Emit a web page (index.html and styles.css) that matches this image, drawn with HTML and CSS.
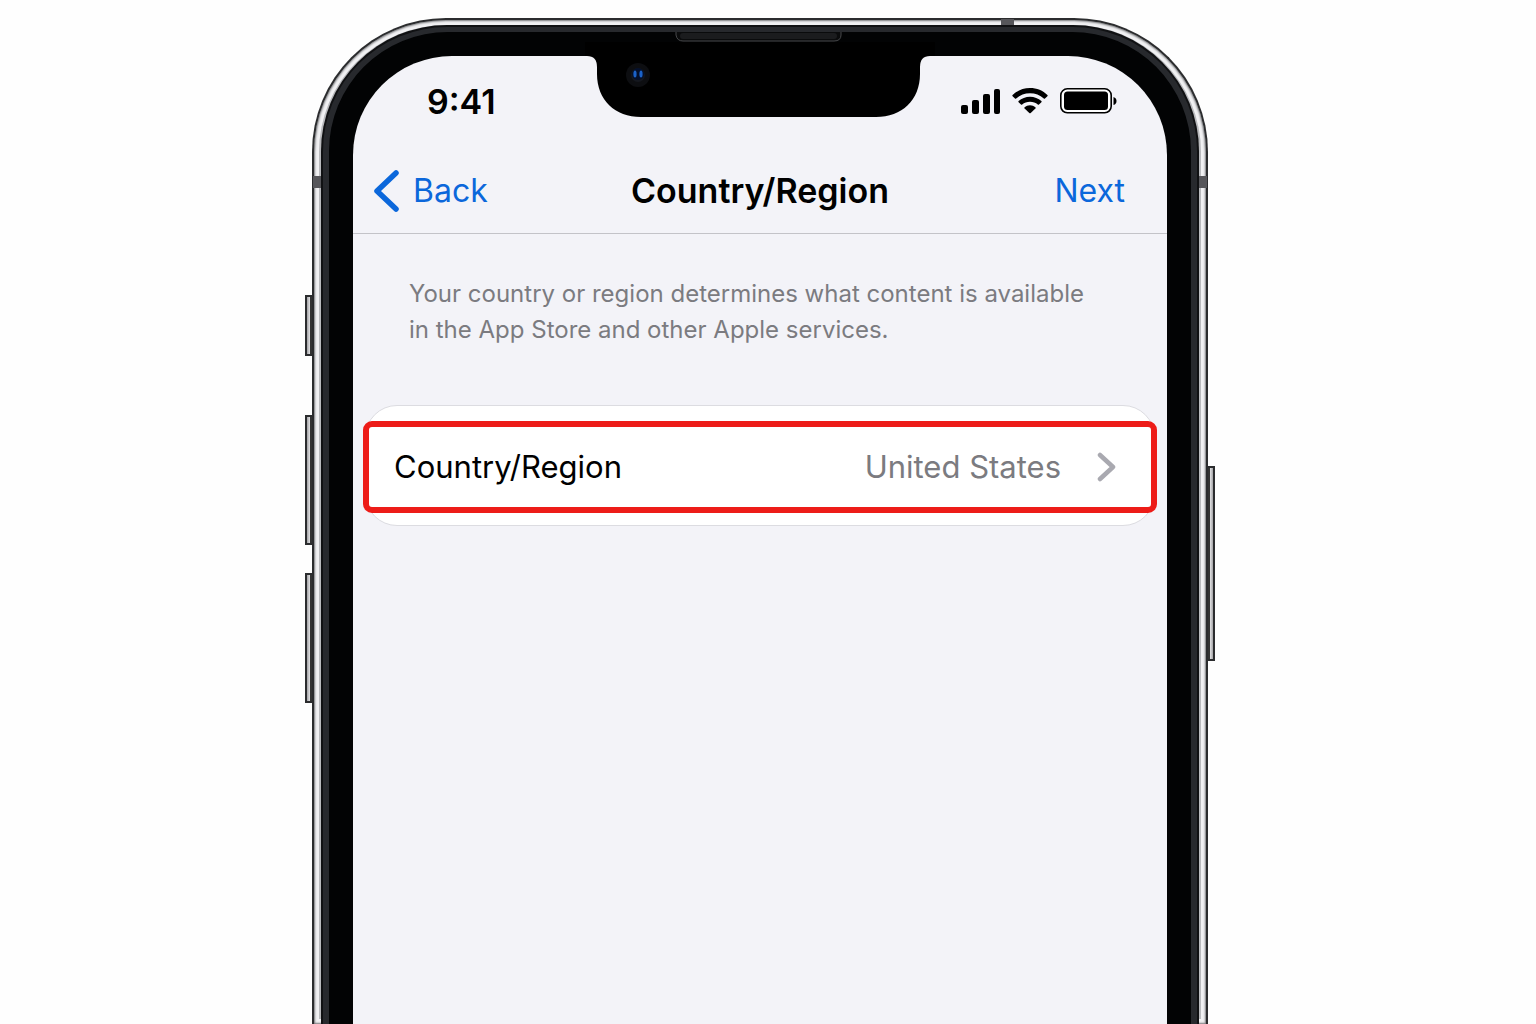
FILE: index.html
```html
<!DOCTYPE html>
<html lang="en">
<head>
	<meta charset="UTF-8">
	<meta name="viewport" content="width=device-width, initial-scale=1.0">
	<title>Country/Region</title>
	<link rel="stylesheet" href="styles.css">
</head>
<body>

	<div class="phone">
		<!-- SIDE BUTTONS -->
		<span class="side-button mute"></span>
		<span class="side-button volume-up"></span>
		<span class="side-button volume-down"></span>
		<span class="side-button power"></span>

		<div class="metal">
			<span class="antenna antenna-left"></span>
			<span class="antenna antenna-right"></span>
			<span class="antenna antenna-top"></span>

			<div class="rim">
				<div class="bezel">

					<!-- NOTCH -->
					<svg class="notch" width="350" height="87" viewBox="0 0 350 87" aria-hidden="true">
						<path d="M0 24H2Q12 24 12 35V42C12 68 30 85 56 85H291C317 85 335 68 335 42V35Q335 24 345 24H350V10H0Z" fill="#000"/>
						<path d="M91 0V3Q92 9 98 9H249Q256 9 256 3V0" fill="#0a0b0c" stroke="#47484a"/>
						<rect x="95" y="1" width="157" height="6" rx="3" fill="#1b1c1e"/>
						<circle cx="53" cy="43" r="12" fill="#0d0e11"/>
						<circle cx="53" cy="43" r="7" fill="#15181f"/>
						<circle cx="53" cy="42" r="6" fill="#04102c"/>
						<ellipse cx="50" cy="42" rx="1.600" ry="3.500" fill="#1b62c8"/>
						<ellipse cx="56" cy="42" rx="1.600" ry="3.500" fill="#1b62c8"/>
					</svg>

					<div class="screen">
						<!-- STATUS BAR -->
						<div class="status-bar">
							<span class="time">9:41</span>
							<div class="status-icons">
								<svg width="40" height="26" viewBox="0 0 40 26" aria-hidden="true">
									<rect x="1" y="17" width="7" height="9" rx="2"/>
									<rect x="12" y="12" width="7" height="14" rx="2"/>
									<rect x="23" y="6" width="7" height="20" rx="2"/>
									<rect x="34" y="1" width="6" height="25" rx="2"/>
								</svg>
								<svg width="36" height="26" viewBox="0 0 36 26" aria-hidden="true">
									<path d="M18 0C11.200 0 5 2.600 .6 7Q0 7.600 .6 8.200L3 10.600Q3.600 11 4.200 10.500C8 7 12.800 5.200 18 5.200S28 7 31.800 10.500Q32.400 11 33 10.600L35.400 8.200Q36 7.600 35.400 7C31 2.600 24.800 0 18 0Z"/>
									<path d="M18 8.800C13.700 8.800 9.600 10.400 6.600 13.100Q6 13.700 6.600 14.300L9 16.600Q9.600 17.100 10.200 16.600C12.300 14.800 15 13.800 18 13.800S23.700 14.800 25.800 16.600Q26.400 17.100 27 16.600L29.400 14.300Q30 13.700 29.400 13.100C26.400 10.400 22.300 8.800 18 8.800Z"/>
									<path d="M18 17.200C15.900 17.200 14 17.900 12.600 19.200Q12 19.800 12.600 20.400L17.300 25Q18 25.600 18.700 25L23.400 20.400Q24 19.800 23.400 19.200C22 17.900 20.100 17.200 18 17.200Z"/>
								</svg>
								<svg width="57" height="26" viewBox="0 0 57 26" aria-hidden="true">
									<rect x=".8" y=".8" width="50.400" height="24" rx="6.500" fill="#fff" stroke="#000" stroke-width="1.600"/>
									<rect x="4" y="3.500" width="44" height="18.500" rx="3.500"/>
									<path d="M53.500 9Q56.500 10 56.500 13T53.500 17Z"/>
								</svg>
							</div>
						</div>

						<!-- NAVIGATION BAR -->
						<header class="navbar">
							<button type="button" class="nav-button back">
								<svg width="26" height="42" viewBox="0 0 26 42" aria-hidden="true">
									<path d="M23 3L4 21L23 39" fill="none" stroke="currentColor" stroke-width="5.500" stroke-linecap="round" stroke-linejoin="round"/>
								</svg>
								Back
							</button>
							<h1>Country/Region</h1>
							<button type="button" class="nav-button next">Next</button>
						</header>

						<!-- CONTENT -->
						<main>
							<p class="description">Your country or region determines what content is available in the App Store and other Apple services.</p>
							<div class="card">
								<button type="button" class="row">
									<span class="label">Country/Region</span>
									<span class="value">United States</span>
									<svg width="19" height="30" viewBox="0 0 19 30" aria-hidden="true">
										<path d="M3 3L16 15L3 27" fill="none" stroke="#a9a9b0" stroke-width="4.500" stroke-linecap="round" stroke-linejoin="round"/>
									</svg>
								</button>
								<span class="highlight"></span>
							</div>
						</main>
					</div>
				</div>
			</div>
		</div>
	</div>

</body>
</html>
```
FILE: styles.css
```css
* {
	margin: 0;
	padding: 0;
	box-sizing: border-box;
	font-family: Inter, "Liberation Sans", sans-serif;
}

body {
	background: #fefefe;
	color: #000;
	display: flex;
	flex-direction: column;
	align-items: center;
	min-height: 100vh;
	padding: 18px 24px 0 8px;
}

/* PHONE BODY */
.phone {
	position: relative;
	display: flex;
	flex: 1;
	width: 100%;
	max-width: 896px;
}

.metal,
.rim,
.bezel,
.screen {
	display: flex;
	flex: 1;
	min-width: 0;
}

.metal {
	position: relative;
	padding: 5px 7px 0;
	border: 2px solid #2b2c2e;
	border-bottom: none;
	border-radius: 134px 134px 0 0;
	background: #b9babd;
	box-shadow: inset 0 0 2px 1px #77787b, inset 0 0 0 5px #f1f1f3;
}

.rim {
	padding: 5px 6px 0;
	border: 2px solid #101113;
	border-bottom: none;
	border-radius: 126px 126px 0 0;
	background: #27292d;
}

.bezel {
	position: relative;
	padding: 24px 24px 0;
	border-radius: 119px 119px 0 0;
	background: #020304;
}

.screen {
	flex-direction: column;
	border-radius: 99px 99px 0 0;
	background: #f3f3f8;
}

.antenna {
	position: absolute;
	background: #56565a;
}

.antenna-left,
.antenna-right {
	top: 156px;
	width: 8px;
	height: 12px;
}

.antenna-left {
	left: -1px;
}

.antenna-right {
	right: -1px;
}

.antenna-top {
	top: -1px;
	right: 192px;
	width: 13px;
	height: 6px;
}

/* SIDE BUTTONS */
.side-button {
	position: absolute;
	left: -7px;
	width: 9px;
	border: 2px solid #2b2c2e;
	background: linear-gradient(90deg, #a3a3a6, #d8d8da 50%, #333 60%);
}

.mute {
	top: 277px;
	height: 61px;
}

.volume-up {
	top: 397px;
	height: 130px;
}

.volume-down {
	top: 555px;
	height: 130px;
}

.power {
	top: 448px;
	left: auto;
	right: -7px;
	height: 195px;
	background: linear-gradient(270deg, #a3a3a6, #d8d8da 50%, #333 60%);
}

/* NOTCH */
.notch {
	position: absolute;
	top: 0;
	left: 50%;
	transform: translateX(-50%);
}

/* STATUS BAR */
.status-bar {
	display: flex;
	justify-content: space-between;
	align-items: center;
	height: 92px;
	padding: 0 50px 2px 74px;
}

.time {
	font-size: 34px;
	font-weight: 600;
}

.status-icons {
	display: flex;
	align-items: center;
	gap: 12px;
}

/* NAVIGATION BAR */
.navbar {
	display: grid;
	grid-template-columns: 1fr auto 1fr;
	align-items: center;
	height: 86px;
	padding: 0 20px;
	border-bottom: 1px solid #c3c3c8;
}

.navbar h1 {
	font-size: 34px;
	font-weight: 600;
}

.nav-button {
	display: flex;
	align-items: center;
	gap: 14px;
	border: none;
	background: none;
	color: #0b67db;
	font-size: 32px;
	cursor: pointer;
}

.next {
	justify-self: end;
	padding-right: 22px;
}

/* CONTENT */
.description {
	padding: 42px 72px 57px 56px;
	color: #7b7b80;
	font-size: 24px;
	line-height: 36px;
}

.card {
	position: relative;
	margin: 0 12px;
	border: 1px solid #dcdce1;
	border-radius: 32px;
	background: #fff;
}

.row {
	display: flex;
	align-items: center;
	width: 100%;
	height: 119px;
	padding: 2px 38px 0 28px;
	border: none;
	background: none;
	font-size: 31px;
	text-align: left;
	cursor: pointer;
}

.label {
	flex: 1;
}

.value {
	margin-right: 36px;
	color: #7b7b80;
}

.highlight {
	position: absolute;
	inset: 15px -3px 12px;
	border: 6px solid #ed1c18;
	border-radius: 9px;
	pointer-events: none;
}
```
